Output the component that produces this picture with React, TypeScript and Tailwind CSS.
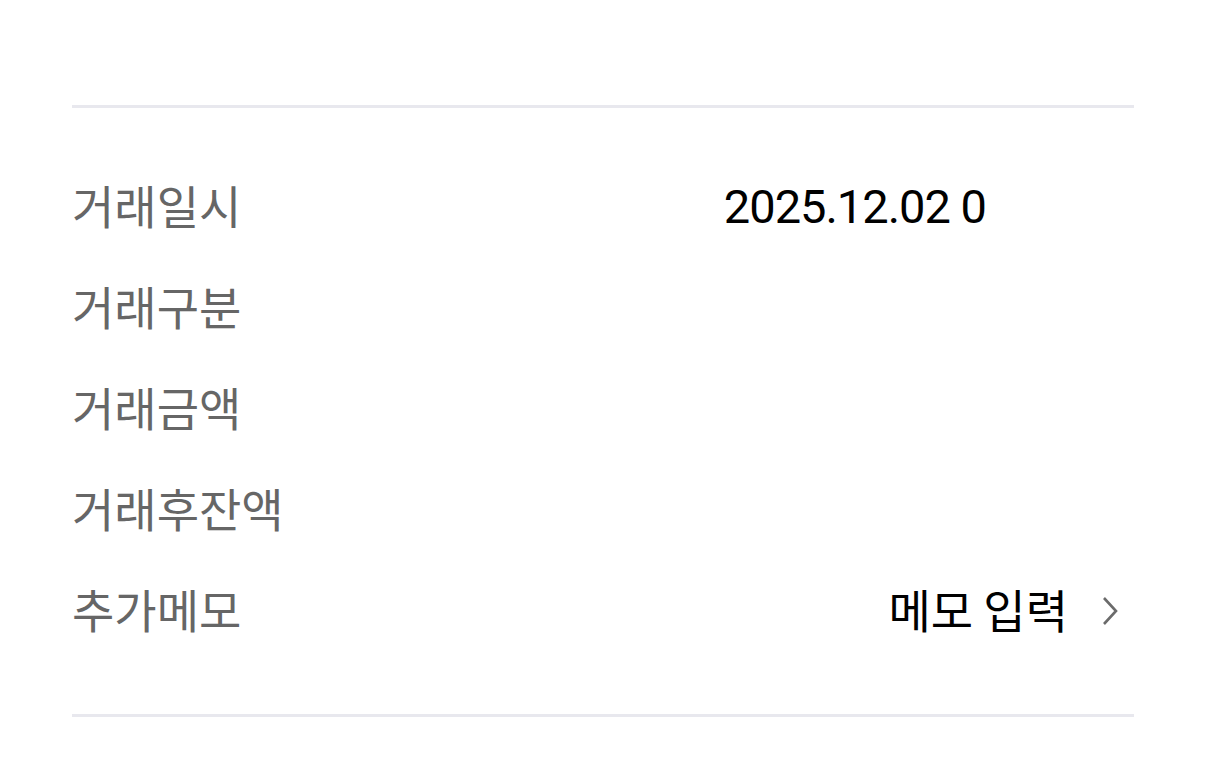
const rows: { label: string; value?: string; memo?: boolean }[] = [
  { label: "거래일시", value: "2025.12.02 0" },
  { label: "거래구분" },
  { label: "거래금액" },
  { label: "거래후잔액" },
  { label: "추가메모", memo: true },
];

export default function App() {
  return (
    <main className="min-h-screen bg-white px-[72px] pt-[105px] font-['Noto_Sans_CJK_KR',sans-serif]">
      <div className="h-[3px] bg-[#e8e8ee]" />
      <div className="flex flex-col pb-[53px] pt-[48px]">
        {rows.map((row) => (
          <div key={row.label} className="flex h-[101px] items-center justify-between">
            <span className="pb-[6px] text-[46px] leading-none text-[#666666]">{row.label}</span>
            {row.value && (
              <span className="mr-[148px] font-['Roboto',sans-serif] text-[47px] leading-none tracking-[-1px] text-black">
                {row.value}
              </span>
            )}
            {row.memo && (
              <span className="flex items-center">
                <span className="pb-[6px] text-[46px] leading-none text-black">메모 입력</span>
                <svg width="20" height="32" viewBox="0 0 20 32" className="ml-[32px] mr-[14px]">
                  <path d="M4 3 L16 16 L4 29" fill="none" stroke="#6b6b6b" strokeWidth="2.6" />
                </svg>
              </span>
            )}
          </div>
        ))}
      </div>
      <div className="h-[3px] bg-[#e8e8ee]" />
    </main>
  );
}
